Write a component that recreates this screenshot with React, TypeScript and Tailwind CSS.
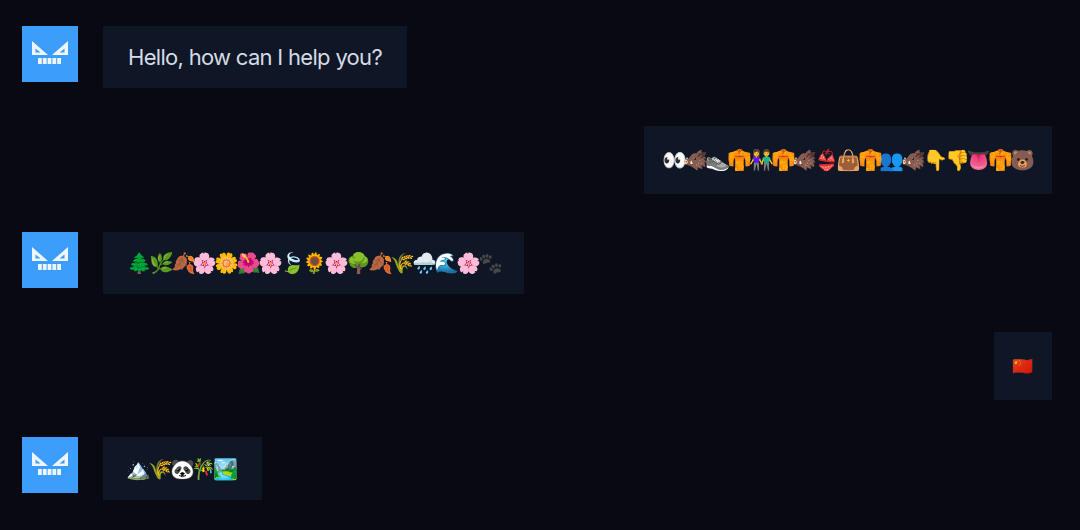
function Avatar() {
  return (
    <div className="w-14 h-14 bg-[#3c9dfb] shrink-0">
      <svg width="56" height="56" viewBox="0 0 56 56">
        <path fillRule="evenodd" fill="#eef6ff" d="M10 15 L26 29 L10 29 Z M13.500 22.500 L13.500 26.500 L18.500 26.500 Z" />
        <path fillRule="evenodd" fill="#eef6ff" d="M46 15 L30 29 L46 29 Z M42.500 22.500 L42.500 26.500 L37.500 26.500 Z" />
        <path fill="#eef6ff" d="M16 32h3.800v6H16z M20.800 32h3.800v6h-3.800z M25.600 32h3.800v6h-3.800z M30.400 32h3.800v6h-3.800z M35.200 32h3.800v6h-3.800z" />
      </svg>
    </div>
  );
}
function Kimono() {
  return <span className="[filter:brightness(.7)_sepia(1)_saturate(7)_hue-rotate(-8deg)]">👘</span>;
}
export default function App() {
  const e = "text-[20px] leading-[22px] font-['Noto_Color_Emoji','Inter',sans-serif]";
  return (
    <div className="w-[1080px] h-[530px] bg-[#080912] overflow-hidden flex flex-col pt-[26px] px-[22px] font-['Inter',sans-serif]">
      <div className="flex gap-[25px] items-start">
        <Avatar />
        <div className="h-[62px] bg-[#0f1626] px-[25px] flex items-center text-[22px] tracking-[-0.7px] text-[#d5dbe5]">Hello, how can I help you?</div>
      </div>
      <div className={"self-end mr-[6px] mt-[38px] h-[68px] bg-[#0f1626] pl-[18px] pr-[20px] flex items-center tracking-[-3.15px] " + e}>
        <span>
          👀🐗<span className="grayscale brightness-125">👟</span><Kimono />👫<Kimono />🐗👙👜<Kimono />👥🐗👇👎👅<Kimono />🐻
        </span>
      </div>
      <div className="flex gap-[25px] items-start mt-[38px]">
        <Avatar />
        <div className={"h-[62px] bg-[#0f1626] pl-[24px] pr-[24px] flex items-center tracking-[-2.95px] " + e}>
          <span>🌲🌿🍂🌸🌼🌺🌸🍃🌻🌸🌳🍂🌾🌧🌊🌸<span className="grayscale brightness-75">🐾</span></span>
        </div>
      </div>
      <div className="self-end mr-[6px] mt-[38px] h-[68px] bg-[#0f1626] pl-[19px] pr-[21px] flex items-center text-[17px] leading-[22px] tracking-[-2.95px] font-['Noto_Color_Emoji','Inter',sans-serif]">🇨🇳</div>
      <div className="flex gap-[25px] items-start mt-[37px]">
        <Avatar />
        <div className={"h-[63px] bg-[#0f1626] pl-[23px] pr-[26px] flex items-center tracking-[-2.95px] " + e}>🏔🌾🐼🎋🏞</div>
      </div>
    </div>
  );
}
